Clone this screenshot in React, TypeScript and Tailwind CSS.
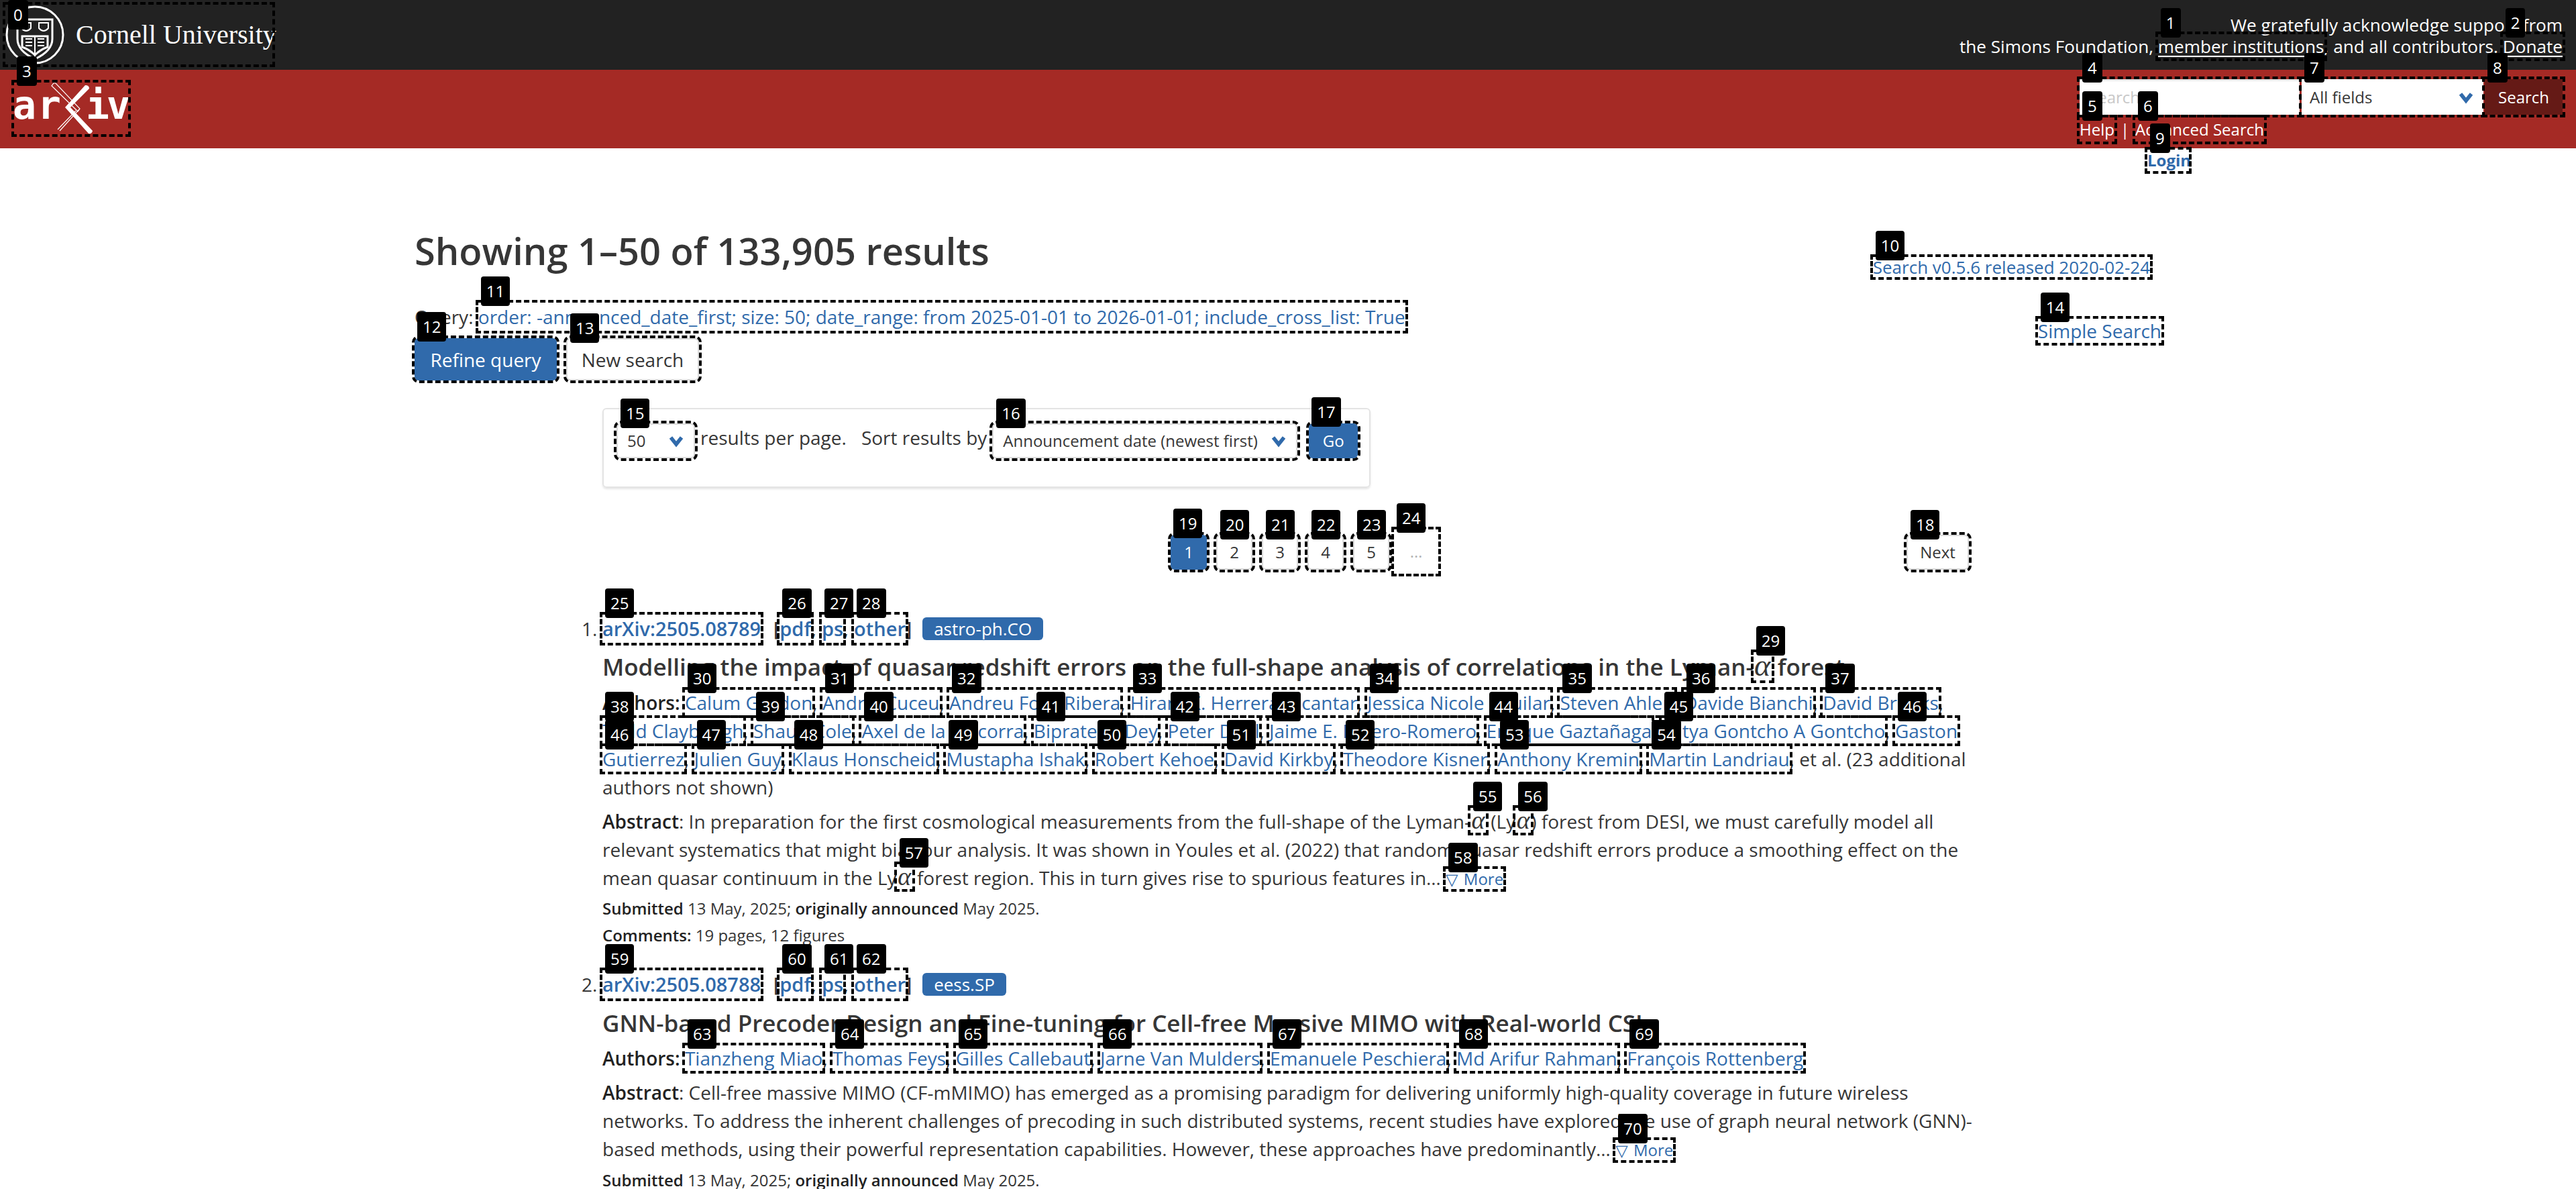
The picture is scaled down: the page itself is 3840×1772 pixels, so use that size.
import React from "react";

function A({ n, className = "", lab = "", children }: { n: number; className?: string; lab?: string; children?: React.ReactNode }) {
  return (
    <span className={"relative outline-4 outline-dashed outline-black " + className}>
      {children}
      <span className={"absolute left-[4px] z-10 h-[44px] rounded-[4px] bg-black px-[8px] text-[24px] leading-[44px] font-normal not-italic text-white whitespace-nowrap font-['Open_Sans'] no-underline " + (lab || "-top-[39px]")}>
        {n}
      </span>
    </span>
  );
}

const Chev = ({ className = "" }: { className?: string }) => (
  <svg viewBox="0 0 20 20" className={"h-[20px] w-[20px] " + className}>
    <path d="M2 5 L10 15 L18 5" fill="none" stroke="#306aab" strokeWidth="5.5" strokeLinejoin="miter" />
  </svg>
);

const Seal = () => (
  <svg viewBox="0 0 88 88" className="h-[88px] w-[88px] shrink-0">
    <circle cx="44" cy="44" r="42" fill="none" stroke="#fff" strokeWidth="3" />
    <path d="M18 21 H70 V50 Q70 68 44 80 Q18 68 18 50 Z" fill="none" stroke="#fff" strokeWidth="3" />
    <path d="M25 46 H63 V62 Q52 66 44 74 Q36 66 25 62 Z" fill="none" stroke="#fff" strokeWidth="3" />
    <path d="M44 46 V82 M30 50 H40 M30 55 H40 M30 60 H40 M48 50 H58 M48 55 H58 M48 60 H58" stroke="#fff" strokeWidth="2" />
    <path d="M24 26 H38 V34 Q31 42 24 34 Z M50 26 H64 V34 Q57 42 50 34 Z" fill="none" stroke="#fff" strokeWidth="2" />
  </svg>
);

const Logo = () => (
  <svg viewBox="0 0 172 78" className="h-[78px] w-[172px] overflow-visible">
    <text x="-2" y="54" fontFamily="'DejaVu Sans Mono'" fontWeight="700" fontSize="58" letterSpacing="2" fill="#fff">ar</text>
    <text x="107" y="54" fontFamily="'DejaVu Sans Mono'" fontWeight="700" fontSize="58" letterSpacing="-4" fill="#fff">iv</text>
    <path d="M59 1 L62 1 L98 39 L95 43 L56 5 Z" fill="none" stroke="#fff" strokeWidth="1.2" />
    <path d="M65 70 L92 42 M68 72 L97 40" fill="none" stroke="#fff" strokeWidth="1.2" />
    <path d="M106 4 Q112 4 112 9 L84 37 L117 72 Q116 77 111 76 L76 37 Z" fill="#fff" />
  </svg>
);

const Alpha = ({ n, big = false }: { n: number; big?: boolean }) => (
  <A n={n} className={"inline-block italic font-normal font-['Liberation_Serif'] text-center " + (big ? "w-[27px] h-[42px] text-[46px] leading-[40px]" : "w-[23px] h-[37px] text-[38px] leading-[37px]")}>
    α
  </A>
);

const link = "text-[#306aab]";

function Authors({ items }: { items: [string, number][] }) {
  return (
    <>
      {items.map(([name, n], i) => (
        <React.Fragment key={n + name}>
          <A n={n} className={link}>{name}</A>
          {i < items.length - 1 ? (name === "Gaston" ? " " : ", ") : ""}
        </React.Fragment>
      ))}
    </>
  );
}

function TitleRow({ num, id, n, tag }: { num: string; id: string; n: number; tag: string }) {
  return (
    <div className="flex items-center h-[42px] leading-[42px] whitespace-nowrap">
      <span className="-ml-[31px] w-[31px]">{num}</span>
      <A n={n} className={"inline-block text-[29px] font-semibold " + link}>{id}</A>
      <span className="ml-[19px] font-semibold">[</span>
      <A n={n + 1} className={"inline-block text-[29px] font-semibold " + link}>pdf</A>
      <span className="w-[16px] font-semibold">,</span>
      <A n={n + 2} className={"inline-block text-[29px] font-semibold " + link}>ps</A>
      <span className="w-[16px] font-semibold">,</span>
      <A n={n + 3} className={"inline-block text-[29px] font-semibold " + link}>other</A>
      <span className="font-semibold">]</span>
      <span className="ml-[16px] flex h-[34px] items-center rounded-[6px] bg-[#306aab] px-[17px] text-[26px] text-white">{tag}</span>
    </div>
  );
}

const PageBtn = ({ n, label, active = false }: { n: number; label: string; active?: boolean }) => (
  <A n={n} className={"flex h-[52px] w-[54px] items-center justify-center rounded-[6px] text-[24px] " + (active ? "bg-[#306aab] text-white" : "border-2 border-[#dbdbdb] text-[#363636]")}>
    {label}
  </A>
);

export default function App() {
  return (
    <div className="h-[1772px] w-[3840px] overflow-hidden bg-white font-['Open_Sans','Noto_Sans',sans-serif] text-[28px] text-[#363636]">
      <div className="flex h-[104px] justify-between bg-[#222222] text-white">
        <A n={0} lab="-top-[7px]" className="ml-[8px] mt-[7px] flex h-[89px] w-[398px] items-center gap-[17px]">
          <span><Seal /></span>
          <span className="font-['Liberation_Serif',serif] text-[40px] leading-none whitespace-nowrap">Cornell University</span>
        </A>
        <div className="pr-[20px] pt-[21px] text-right text-[26.15px] leading-[32px]">
          We gratefully acknowledge support from
          <br />
          the Simons Foundation, <A n={1} className="underline decoration-2 underline-offset-4">member institutions</A>, and all contributors.{" "}
          <A n={2} className="underline decoration-2 underline-offset-4">Donate</A>
        </div>
      </div>

      <div className="flex h-[117px] justify-between bg-[#a52a25]">
        <A n={3} className="ml-[21px] mt-[19px] block h-[77px] w-[170px]">
          <Logo />
        </A>
        <div className="mr-[20px] mt-[14px] w-[720px] text-white">
          <div className="flex h-[53px] text-[24px]">
            <A n={4} className="flex w-[328px] items-center bg-white pl-[14px] text-[#c8c8c8] shadow-[inset_0_2px_3px_rgba(0,0,0,0.15)]">Search...</A>
            <A n={7} className="ml-[3px] flex w-[271px] items-center justify-between bg-white pl-[12px] pr-[16px] text-[#363636]">
              All fields
              <Chev />
            </A>
            <A n={8} className="ml-[2px] flex w-[116px] items-center justify-center bg-[#651a16] text-white">Search</A>
          </div>
          <div className="mt-[3px] flex h-[38px] items-center text-[24px]">
            <A n={5} className="block">Help</A>
            <span className="mx-[9px]">|</span>
            <A n={6} className="block">Advanced Search</A>
          </div>
        </div>
      </div>

      <div className="h-[40px] pl-[3201px] pt-[2px]">
        <A n={9} className={"block w-[62px] text-[24px] font-bold leading-[32px] whitespace-nowrap " + link}>Login</A>
      </div>

      <div className="flex">
        <div className="w-[2300px] pl-[618px]">
          <h1 className="mt-[76px] text-[56px] font-semibold leading-[72px] text-[#363636]">Showing 1–50 of 133,905 results</h1>
          <div className="mt-[42px] h-[42px] whitespace-nowrap leading-[42px]">
            Query: <A n={11} className={"inline-block " + link}>order: -announced_date_first; size: 50; date_range: from 2025-01-01 to 2026-01-01; include_cross_list: True</A>
          </div>
          <div className="mt-[11px] flex gap-[14px]">
            <A n={12} className="flex h-[63px] w-[212px] items-center justify-center rounded-[6px] bg-[#306aab] text-white">Refine query</A>
            <A n={13} className="flex h-[63px] w-[198px] items-center justify-center rounded-[6px] border-2 border-[#dbdbdb]">New search</A>
          </div>
          <div className="ml-[280px] mt-[41px] flex h-[119px] w-[1145px] items-start rounded-[6px] border-2 border-[#e4e4e4] pl-[19px] pt-[21px] shadow-[0_2px_3px_rgba(10,10,10,0.1)]">
            <A n={15} className="flex h-[52px] w-[117px] items-center justify-between rounded-[6px] border-2 border-[#dbdbdb] pl-[14px] pr-[16px] text-[24px]">
              50
              <Chev />
            </A>
            <span className="ml-[8px] leading-[42px] whitespace-nowrap">results per page.</span>
            <span className="ml-[22px] leading-[42px] whitespace-nowrap">Sort results by</span>
            <A n={16} className="ml-[8px] flex h-[52px] w-[455px] items-center justify-between rounded-[6px] border-2 border-[#dbdbdb] pl-[14px] pr-[16px] text-[24px] whitespace-nowrap">
              Announcement date (newest first)
              <Chev />
            </A>
            <A n={17} className="ml-[17px] flex h-[52px] w-[73px] items-center justify-center rounded-[6px] bg-[#306aab] text-white text-[24px]">Go</A>
          </div>
        </div>
        <div className="flex flex-1 flex-col items-end pr-[618px]">
          <A n={10} className={"mr-[17px] mt-[122px] block text-[26px] leading-[30px] whitespace-nowrap " + link}>Search v0.5.6 released 2020-02-24</A>
          <A n={14} className={"mt-[62px] block leading-[36px] whitespace-nowrap " + link}>Simple Search</A>
        </div>
      </div>

      <div className="ml-[898px] w-[2042px]">
        <div className="mt-[70px] flex items-start">
          <div className="ml-[847px] flex items-start gap-[14px]">
            <PageBtn n={19} label="1" active />
            <PageBtn n={20} label="2" />
            <PageBtn n={21} label="3" />
            <PageBtn n={22} label="4" />
            <PageBtn n={23} label="5" />
            <A n={24} className="-ml-[7px] -mt-[8px] flex h-[66px] w-[66px] items-center justify-center text-[#b5b5b5] text-[24px]">…</A>
          </div>
          <A n={18} className="ml-auto mr-[5px] flex h-[52px] w-[93px] items-center justify-center rounded-[6px] border-2 border-[#dbdbdb] text-[24px]">Next</A>
        </div>

        <div className="mt-[61px]">
          <TitleRow num="1." id="arXiv:2505.08789" n={25} tag="astro-ph.CO" />
          <div className="mt-[13px] text-[35px] font-semibold leading-[46px] whitespace-nowrap">
            Modelling the impact of quasar redshift errors on the full-shape analysis of correlations in the Lyman-<Alpha n={29} big /> forest
          </div>
          <div className="mt-[9px] leading-[42px]">
            <span className="font-semibold text-[#222]">Authors:</span>{" "}
            <Authors
              items={[
                ["Calum Gordon", 30], ["Andrei Cuceu", 31], ["Andreu Font-Ribera", 32], ["Hiram K. Herrera-Alcantar", 33], ["Jessica Nicole Aguilar", 34],
                ["Steven Ahlen", 35], ["Davide Bianchi", 36], ["David Brooks", 37], ["Todd Claybaugh", 38], ["Shaun Cole", 39], ["Axel de la Macorra", 40],
                ["Biprateep Dey", 41], ["Peter Doel", 42], ["Jaime E. Forero-Romero", 43], ["Enrique Gaztañaga", 44], ["Satya Gontcho A Gontcho", 45],
                ["Gaston", 46], ["Gutierrez", 46], ["Julien Guy", 47], ["Klaus Honscheid", 48], ["Mustapha Ishak", 49], ["Robert Kehoe", 50],
                ["David Kirkby", 51], ["Theodore Kisner", 52], ["Anthony Kremin", 53], ["Martin Landriau", 54],
              ]}
            />
            , et al. (23 additional authors not shown)
          </div>
          <div className="mt-[9px] leading-[42px]">
            <span className="font-semibold text-[#222]">Abstract</span>: In preparation for the first cosmological measurements from the full-shape of the Lyman-<Alpha n={55} /> (Ly<Alpha n={56} />) forest from DESI, we must carefully model all relevant systematics that might bias our analysis. It was shown in Youles et al. (2022) that random quasar redshift errors produce a smoothing effect on the mean quasar continuum in the Ly<Alpha n={57} /> forest region. This in turn gives rise to spurious features in… <A n={58} className={"text-[26px] font-['DejaVu_Sans'] " + link}><span className="font-['DejaVu_Sans'] text-[24px]">▽</span> <span className="font-['Open_Sans'] text-[24px]">More</span></A>
          </div>
          <div className="mt-[4px] text-[24px] leading-[36px]">
            <span className="font-semibold text-[#222]">Submitted</span> 13 May, 2025; <span className="font-semibold text-[#222]">originally announced</span> May 2025.
          </div>
          <div className="mt-[4px] text-[24px] leading-[36px]">
            <span className="font-semibold text-[#222]">Comments:</span> 19 pages, 12 figures
          </div>
        </div>

        <div className="mt-[34px]">
          <TitleRow num="2." id="arXiv:2505.08788" n={59} tag="eess.SP" />
          <div className="mt-[15px] text-[35px] font-semibold leading-[44px] whitespace-nowrap">
            GNN-based Precoder Design and Fine-tuning for Cell-free Massive MIMO with Real-world CSI
          </div>
          <div className="mt-[9px] leading-[42px]">
            <span className="font-semibold text-[#222]">Authors:</span>{" "}
            <Authors
              items={[
                ["Tianzheng Miao", 63], ["Thomas Feys", 64], ["Gilles Callebaut", 65], ["Jarne Van Mulders", 66], ["Emanuele Peschiera", 67], ["Md Arifur Rahman", 68], ["François Rottenberg", 69],
              ]}
            />
          </div>
          <div className="mt-[9px] leading-[42px]">
            <span className="font-semibold text-[#222]">Abstract</span>: Cell-free massive MIMO (CF-mMIMO) has emerged as a promising paradigm for delivering uniformly high-quality coverage in future wireless networks. To address the inherent challenges of precoding in such distributed systems, recent studies have explored the use of graph neural network (GNN)-based methods, using their powerful representation capabilities. However, these approaches have predominantly… <A n={70} className={"text-[26px] font-['DejaVu_Sans'] " + link}><span className="font-['DejaVu_Sans'] text-[24px]">▽</span> <span className="font-['Open_Sans'] text-[24px]">More</span></A>
          </div>
          <div className="mt-[5px] text-[24px] leading-[36px]">
            <span className="font-semibold text-[#222]">Submitted</span> 13 May, 2025; <span className="font-semibold text-[#222]">originally announced</span> May 2025.
          </div>
        </div>
      </div>
    </div>
  );
}
